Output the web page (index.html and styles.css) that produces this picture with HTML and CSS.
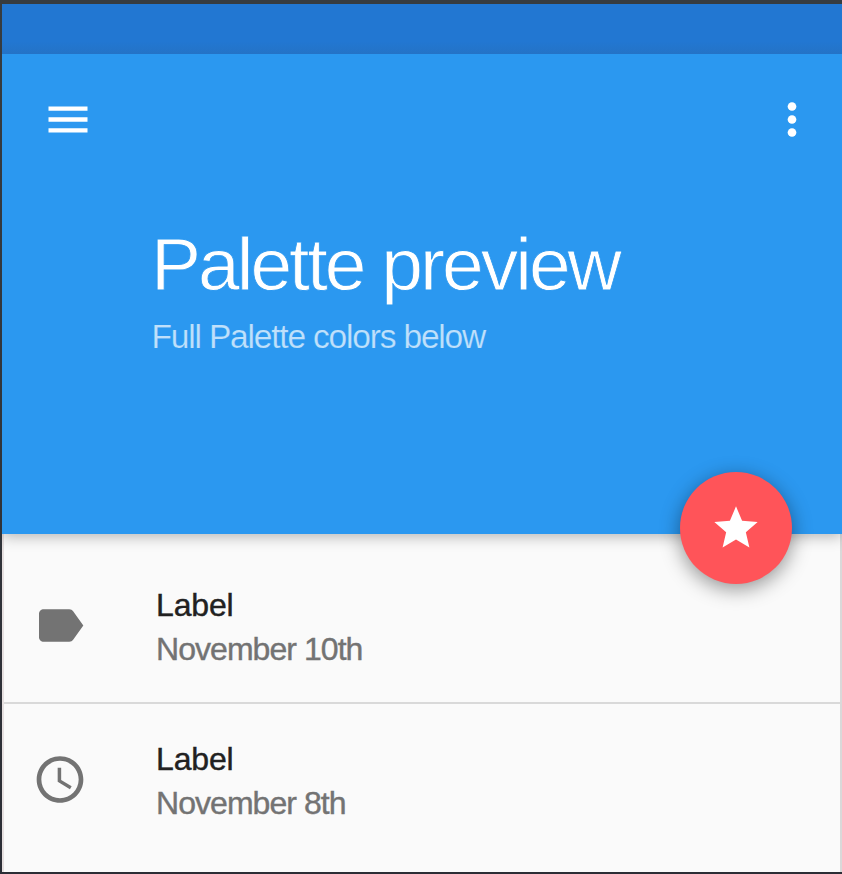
FILE: index.html
```html
<!DOCTYPE html>
<html lang="en">
<head>
<meta charset="utf-8">
<title>Palette preview</title>
<link rel="stylesheet" href="styles.css">
</head>
<body>
<main class="preview">
  <div class="status-bar"></div>
  <header class="header">
    <div class="toolbar">
      <svg class="icon" viewBox="0 0 24 24"><path d="M3 18h18v-2H3v2zm0-5h18v-2H3v2zm0-7v2h18V6H3z"/></svg>
      <svg class="icon" viewBox="0 0 24 24"><circle cx="12" cy="6" r="2"/><circle cx="12" cy="12" r="2"/><circle cx="12" cy="18" r="2"/></svg>
    </div>
    <h1 class="title">Palette preview</h1>
    <p class="subtitle">Full Palette colors below</p>
    <div class="fab">
      <svg class="star" viewBox="0 0 24 24"><path d="M12 17.27L18.18 21l-1.64-7.03L22 9.24l-7.19-.61L12 2 9.19 8.63 2 9.24l5.46 4.73L5.82 21z"/></svg>
    </div>
  </header>
  <section class="list">
    <div class="row">
      <svg class="row-icon" viewBox="0 0 24 24"><path d="M17.63 5.84C17.27 5.33 16.67 5 16 5L5 5.01C3.9 5.01 3 5.9 3 7v10c0 1.1.9 1.99 2 1.99L16 19c.67 0 1.27-.33 1.63-.84L22 12l-4.37-6.16z"/></svg>
      <div>
        <p class="label">Label</p>
        <p class="date">November 10th</p>
      </div>
    </div>
    <div class="row row-last">
      <svg class="row-icon" viewBox="0 0 24 24"><path d="M11.99 2C6.47 2 2 6.48 2 12s4.47 10 9.99 10C17.52 22 22 17.52 22 12S17.52 2 11.99 2zM12 20c-4.42 0-8-3.58-8-8s3.58-8 8-8 8 3.58 8 8-3.58 8-8 8zm.5-13H11v6l5.25 3.15.75-1.23-4.5-2.67z"/></svg>
      <div>
        <p class="label">Label</p>
        <p class="date">November 8th</p>
      </div>
    </div>
  </section>
</main>
</body>
</html>
```
FILE: styles.css
```css
* { box-sizing: border-box; }
body {
  margin: 0;
  width: 842px;
  height: 874px;
  overflow: hidden;
  background: linear-gradient(#373c40, #2b2d35);
  font-family: "Liberation Sans", Arial, sans-serif;
}
.preview { padding: 4px 0 2px 2px; }
.status-bar {
  height: 50px;
  background: linear-gradient(#2277d2 75%, #2473c6);
}
.header {
  position: relative;
  height: 480px;
  background: #2b98f0;
  box-shadow: 0 2px 14px rgba(0, 0, 0, .3);
  clip-path: inset(0 0 -100px 0);
}
.toolbar {
  display: flex;
  justify-content: space-between;
  padding: 39px 24px 0 40px;
}
.icon { display: block; width: 52px; height: 53px; fill: #fff; }
.title, .subtitle, .label, .date { margin: 0; white-space: nowrap; }
.title {
  padding: 74px 0 0 149px;
  font-size: 75px;
  line-height: 88px;
  font-weight: 400;
  letter-spacing: -3px;
  color: #fff;
  -webkit-text-stroke: .8px #2b98f0;
}
.subtitle {
  padding: 9px 0 0 149.5px;
  font-size: 33.5px;
  line-height: 40px;
  letter-spacing: -1.18px;
  color: #bfe0fb;
  -webkit-text-stroke: .2px #2b98f0;
}
.fab {
  position: absolute;
  right: 50px;
  bottom: -50px;
  width: 112px;
  height: 112px;
  border-radius: 50%;
  background: #ff5459;
  box-shadow: 0 5px 20px rgba(0, 0, 0, .42);
  display: flex;
  align-items: center;
  justify-content: center;
}
.star { width: 52px; height: 52px; fill: #fff; }
.list {
  height: 338px;
  background: #fafafa;
  border-left: 2px solid #e6e0e0;
  border-right: 2px solid #d9d9d9;
}
.row {
  display: flex;
  height: 170px;
  padding: 53px 0 0 28px;
  border-bottom: 2px solid #d9d9d9;
}
.row-last { height: 168px; padding-top: 37px; border: 0; }
.row-icon { width: 56px; height: 57px; margin: 10px 68px 0 0; fill: #737373; }
.label, .date { font-size: 32px; line-height: 36px; }
.label { color: #212121; letter-spacing: -.15px; -webkit-text-stroke: .4px #212121; }
.date { padding-top: 8px; color: #737373; letter-spacing: -.95px; -webkit-text-stroke: .4px #737373; }
```
